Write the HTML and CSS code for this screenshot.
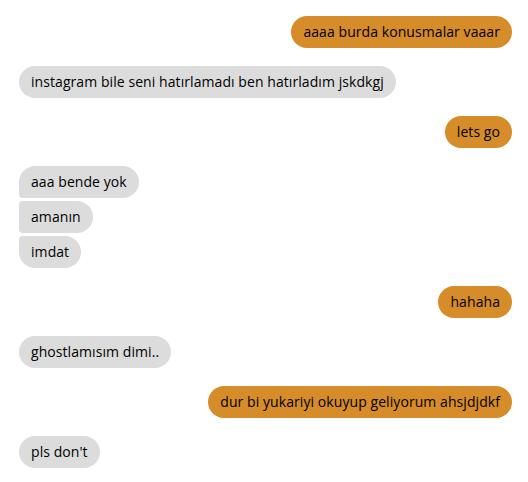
FILE: index.html
```html
<!DOCTYPE html>
<html>
<head>
<meta charset="utf-8">
<link rel="stylesheet" href="styles.css">
</head>
<body>
<div class="chat">
  <div class="group sent"><div class="msg">aaaa burda konusmalar vaaar</div></div>
  <div class="group recv"><div class="msg">instagram bile seni hatırlamadı ben hatırladım jskdkgj</div></div>
  <div class="group sent"><div class="msg">lets go</div></div>
  <div class="group recv">
    <div class="msg">aaa bende yok</div>
    <div class="msg">amanın</div>
    <div class="msg">imdat</div>
  </div>
  <div class="group sent"><div class="msg">hahaha</div></div>
  <div class="group recv"><div class="msg">ghostlamısım dimi..</div></div>
  <div class="group sent"><div class="msg">dur bi yukariyi okuyup geliyorum ahsjdjdkf</div></div>
  <div class="group recv"><div class="msg">pls don't</div></div>
</div>
</body>
</html>
```
FILE: styles.css
```css
html, body {
  margin: 0;
  padding: 0;
  background: #ffffff;
}
.chat {
  display: flex;
  flex-direction: column;
  gap: 18px;
  padding: 16px 16px 0 19px;
  font-family: "Open Sans", "Noto Sans", sans-serif;
  font-size: 14px;
  letter-spacing: 0.07px;
  color: #000;
}
.group {
  display: flex;
  flex-direction: column;
  gap: 3px;
}
.sent { align-items: flex-end; }
.recv { align-items: flex-start; }
.msg {
  height: 32px;
  line-height: 32px;
  padding: 0 12px;
  border-radius: 16px;
  white-space: nowrap;
}
.sent .msg { background: #d68c29; }
.recv .msg { background: #dcdcdc; }
.recv .msg:not(:last-child) { border-bottom-left-radius: 4px; }
.recv .msg:not(:first-child) { border-top-left-radius: 4px; }
.sent .msg:not(:last-child) { border-bottom-right-radius: 4px; }
.sent .msg:not(:first-child) { border-top-right-radius: 4px; }
```
